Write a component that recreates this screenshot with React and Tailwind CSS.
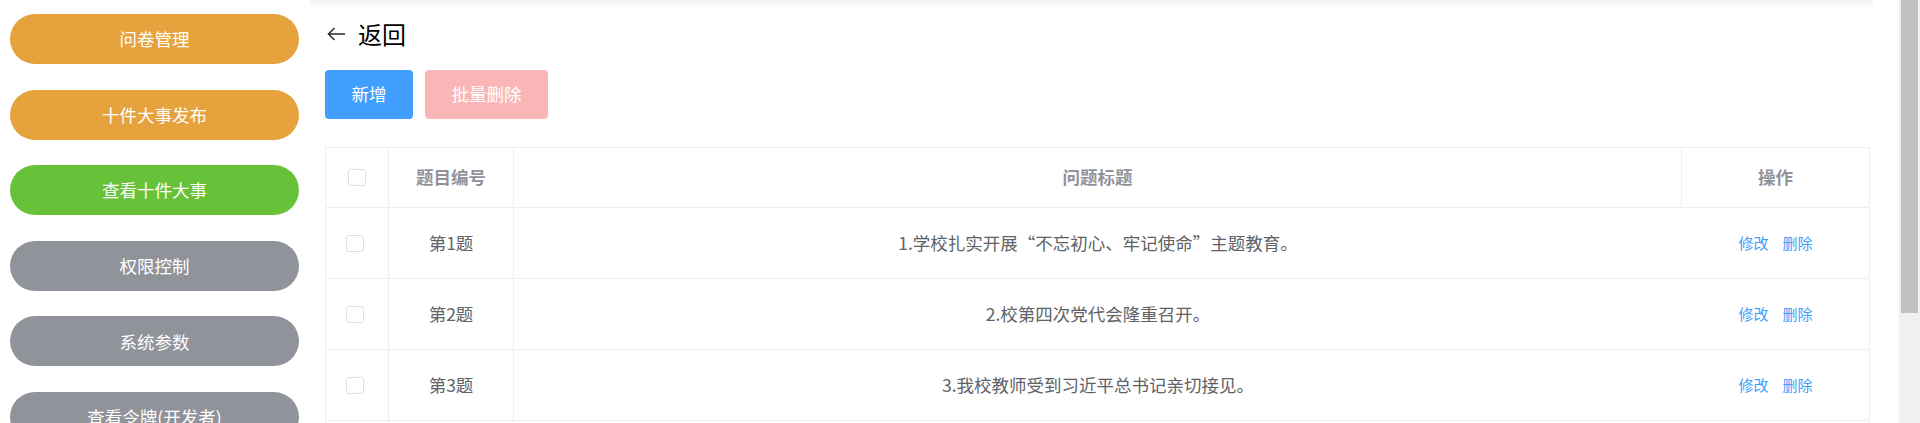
import React from 'react';

const menu = [
  { label: '问卷管理', color: 'bg-[#e6a23c]' },
  { label: '十件大事发布', color: 'bg-[#e6a23c]' },
  { label: '查看十件大事', color: 'bg-[#67c23a]' },
  { label: '权限控制', color: 'bg-[#909399]' },
  { label: '系统参数', color: 'bg-[#909399]' },
  { label: '查看令牌(开发者)', color: 'bg-[#909399]' },
];

const questions = [
  { id: 1, title: '1.学校扎实开展“不忘初心、牢记使命”主题教育。' },
  { id: 2, title: '2.校第四次党代会隆重召开。' },
  { id: 3, title: '3.我校教师受到习近平总书记亲切接见。' },
  { id: 4, title: '4.学校获批新增博士学位授予单位。' },
];

const Checkbox = () => (
  <span className="block w-[18px] h-[17px] rounded-[3px] border border-[#dcdfe6] bg-white"></span>
);

const BackArrow = () => (
  <svg width="19" height="14" viewBox="0 0 19 14" fill="none" stroke="#303133" strokeWidth="1.6">
    <path d="M18 7H1.5" />
    <path d="M7.5 1L1.5 7l6 6" />
  </svg>
);

export default function App() {
  return (
    <div
      className="flex h-[423px] overflow-hidden bg-white"
      style={{ fontFamily: '"Microsoft YaHei", "Noto Sans CJK SC", "Noto Sans", sans-serif' }}
    >
      {/* 侧边菜单 */}
      <aside className="w-[310px] shrink-0 pl-[10px] pr-[11px] pt-[14px] flex flex-col gap-[25.6px]">
        {menu.map(item => (
          <button
            key={item.label}
            className={`${item.color} h-[50px] shrink-0 w-full rounded-full text-white text-[17.5px] leading-none`}
          >
            {item.label}
          </button>
        ))}
      </aside>

      {/* 主体 */}
      <main className="flex-1 min-w-0 flex flex-col">
        <div className="h-[8px] shrink-0 mr-[26px] bg-gradient-to-b from-[#f3f3f3] to-white"></div>
        <div className="pl-[15px] pr-[29px]">
          <div className="flex items-center h-[32px] mt-[10px] gap-[12px] pl-[2px] text-[24px] text-black">
            <BackArrow />
            <span>返回</span>
          </div>

          <div className="flex gap-[12px] mt-[20px]">
            <button className="h-[49px] w-[88px] rounded-[4px] bg-[#409eff] text-white text-[17.5px]">新增</button>
            <button className="h-[49px] w-[123px] rounded-[4px] bg-[#fab6b6] text-white text-[17.5px] cursor-not-allowed">
              批量删除
            </button>
          </div>

          <div className="mt-[28px] border-l border-r border-t border-[#ebeef5] text-[17.5px]">
            <div className="grid grid-cols-[63px_125px_1fr_187px] h-[60px] border-b border-[#ebeef5] font-bold text-[#909399]">
              <div className="flex items-center justify-center border-r border-[#ebeef5]">
                <Checkbox />
              </div>
              <div className="flex items-center justify-center border-r border-[#ebeef5]">题目编号</div>
              <div className="flex items-center justify-center border-r border-[#ebeef5]">问题标题</div>
              <div className="flex items-center justify-center">操作</div>
            </div>

            {questions.map(q => (
              <div
                key={q.id}
                className="grid grid-cols-[63px_125px_1fr_187px] h-[71px] border-b border-[#ebeef5] text-[#606266]"
              >
                <div className="flex items-center justify-center pr-[4px] border-r border-[#ebeef5]">
                  <Checkbox />
                </div>
                <div className="flex items-center justify-center border-r border-[#ebeef5]">第{q.id}题</div>
                <div className="flex items-center justify-center">{q.title}</div>
                <div className="flex items-center justify-center gap-[14px] text-[15px] text-[#409eff]">
                  <span>修改</span>
                  <span>删除</span>
                </div>
              </div>
            ))}
          </div>
        </div>
      </main>

      {/* 滚动条 */}
      <div className="w-[21px] shrink-0 bg-[#f1f1f1] px-[2px]">
        <div className="h-[313px] bg-[#c1c1c1]"></div>
      </div>
    </div>
  );
}
